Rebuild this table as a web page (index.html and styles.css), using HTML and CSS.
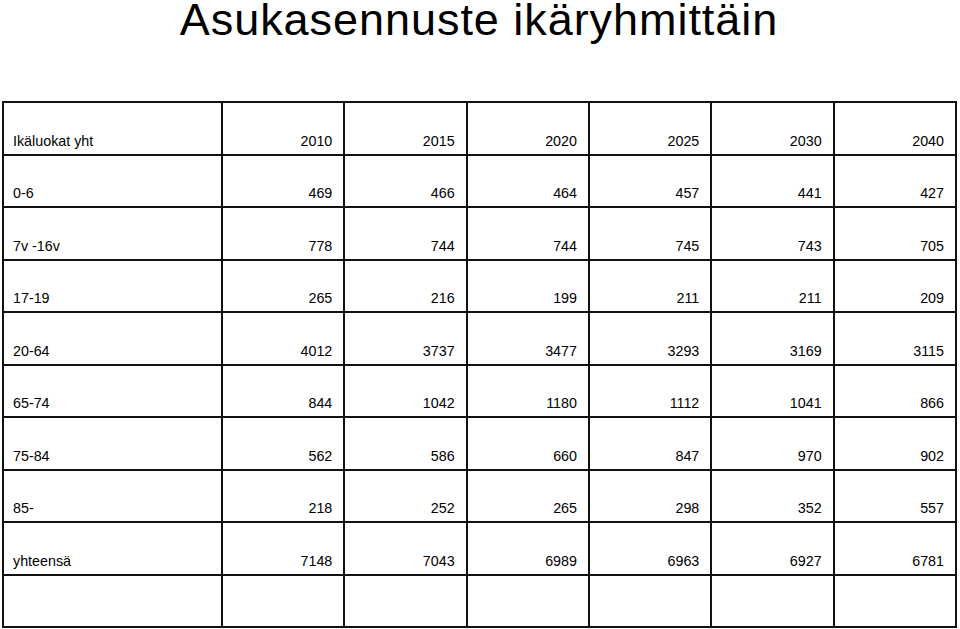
FILE: index.html
```html
<!DOCTYPE html>
<html lang="fi">
<head>
<meta charset="utf-8">
<link rel="stylesheet" href="styles.css">
</head>
<body>
<h1 class="title">Asukasennuste ikäryhmittäin</h1>
<table class="grid">
<colgroup><col class="c-label"><col><col><col><col><col><col></colgroup>
<tr><td>Ikäluokat yht</td><td>2010</td><td>2015</td><td>2020</td><td>2025</td><td>2030</td><td>2040</td></tr>
<tr><td>0-6</td><td>469</td><td>466</td><td>464</td><td>457</td><td>441</td><td>427</td></tr>
<tr><td>7v -16v</td><td>778</td><td>744</td><td>744</td><td>745</td><td>743</td><td>705</td></tr>
<tr><td>17-19</td><td>265</td><td>216</td><td>199</td><td>211</td><td>211</td><td>209</td></tr>
<tr><td>20-64</td><td>4012</td><td>3737</td><td>3477</td><td>3293</td><td>3169</td><td>3115</td></tr>
<tr><td>65-74</td><td>844</td><td>1042</td><td>1180</td><td>1112</td><td>1041</td><td>866</td></tr>
<tr><td>75-84</td><td>562</td><td>586</td><td>660</td><td>847</td><td>970</td><td>902</td></tr>
<tr><td>85-</td><td>218</td><td>252</td><td>265</td><td>298</td><td>352</td><td>557</td></tr>
<tr><td>yhteensä</td><td>7148</td><td>7043</td><td>6989</td><td>6963</td><td>6927</td><td>6781</td></tr>
<tr><td></td><td></td><td></td><td></td><td></td><td></td><td></td></tr>
</table>
</body>
</html>
```
FILE: styles.css
```css
html, body {
  margin: 0;
  padding: 0;
  background: #fff;
}
body {
  font-family: "Liberation Sans", Arial, sans-serif;
  color: #000;
  overflow: hidden;
}
.title {
  margin: 0;
  height: 40px;
  font-size: 45px;
  line-height: 40px;
  letter-spacing: 0.95px;
  font-weight: normal;
  text-align: center;
  padding-right: 2px;
}
.grid {
  border-collapse: collapse;
  table-layout: fixed;
  width: 955px;
  margin: 61px 0 0 2px;
}
.c-label {
  width: 219px;
}
.grid td {
  border: 2px solid #111;
  height: 52.5px;
  box-sizing: border-box;
  padding: 0 11px 5px 9px;
  vertical-align: bottom;
  text-align: right;
  font-size: 14.3px;
  line-height: 16px;
}
.grid td:first-child {
  text-align: left;
}
```
